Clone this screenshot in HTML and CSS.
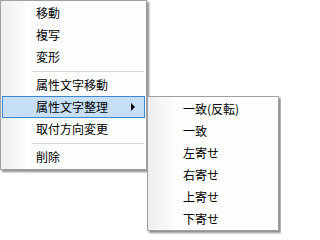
FILE: index.html
```html
<!DOCTYPE html>
<html lang="ja">
<head>
<meta charset="utf-8">
<title>menu</title>
<link rel="stylesheet" href="styles.css">
</head>
<body>
<div class="menu main">
  <div class="item">移動</div>
  <div class="item">複写</div>
  <div class="item">変形</div>
  <div class="sep"></div>
  <div class="item">属性文字移動</div>
  <div class="item active">属性文字整理<span class="arrow"></span>
    <div class="menu sub">
      <div class="item">一致(反転)</div>
      <div class="item">一致</div>
      <div class="item">左寄せ</div>
      <div class="item">右寄せ</div>
      <div class="item">上寄せ</div>
      <div class="item">下寄せ</div>
    </div>
  </div>
  <div class="item">取付方向変更</div>
  <div class="sep"></div>
  <div class="item">削除</div>
</div>
</body>
</html>
```

FILE: styles.css
```css
html, body {
  margin: 0;
  padding: 0;
  background: #ffffff;
}

body {
  width: 281px;
  height: 236px;
  overflow: hidden;
  font-family: "Noto Sans CJK JP", "Noto Sans", sans-serif;
  font-size: 12px;
  color: #000000;
}

.menu {
  box-sizing: border-box;
  border: 1px solid #a0a0a0;
  background-color: #fdfdfd;
  background-image: linear-gradient(to right, #eeeeee 0, #f6f6f6 14px, #fbfbfb 25px);
  background-size: 25px 100%;
  background-repeat: no-repeat;
  box-shadow: 2px 2px 2px rgba(0, 0, 0, 0.45);
}

.main {
  width: 147px;
  padding: 1px 0 1px 0;
}

.sub {
  position: absolute;
  left: 144px;
  top: -1px;
  width: 132px;
  padding: 1px 0 0 0;
  z-index: 2;
}

.item {
  position: relative;
  box-sizing: border-box;
  height: 22px;
  margin: 0 1px;
  border: 1px solid transparent;
  padding-left: 33px;
  line-height: 20px;
  white-space: nowrap;
}

.item.active {
  background: #c6def6;
  border-color: #3a86d4;
}

.arrow {
  position: absolute;
  right: 9px;
  top: 50%;
  margin-top: -4px;
  width: 0;
  height: 0;
  border-left: 4px solid #000000;
  border-top: 4px solid transparent;
  border-bottom: 4px solid transparent;
}

.sep {
  height: 3px;
  margin: 0 2px 2px 31px;
  border-bottom: 1px solid #d5d5d5;
  box-shadow: 0 1px 0 #ffffff;
}
```
